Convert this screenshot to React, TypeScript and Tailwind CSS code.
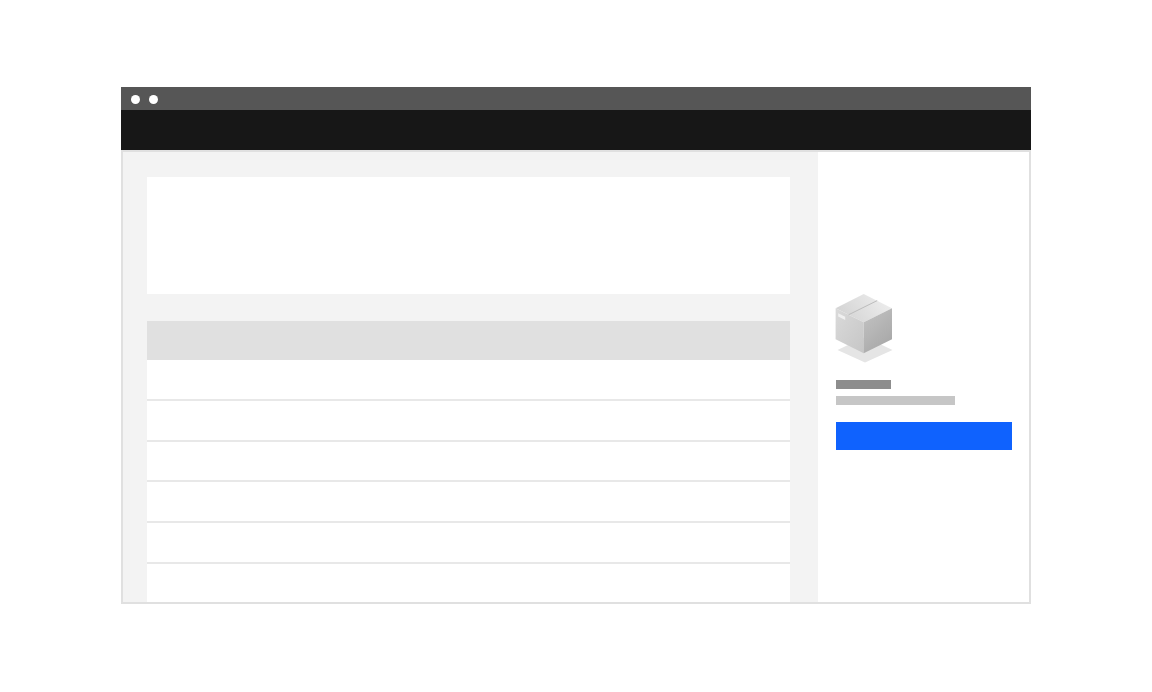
import React from 'react';

const rows = [1, 2, 3, 4, 5];

const BoxIcon: React.FC = () => (
  <svg width="60" height="69" viewBox="0 0 60 69" className="-ml-px" aria-hidden="true">
    <defs>
      <linearGradient id="box-top" x1="0" y1="0.7" x2="1" y2="0.3">
        <stop offset="0" stopColor="#d2d2d2" />
        <stop offset="1" stopColor="#eeeeee" />
      </linearGradient>
      <linearGradient id="box-left" x1="0" y1="0" x2="1" y2="1">
        <stop offset="0" stopColor="#dadada" />
        <stop offset="1" stopColor="#c6c6c6" />
      </linearGradient>
      <linearGradient id="box-right" x1="0" y1="0" x2="0.6" y2="1">
        <stop offset="0" stopColor="#c4c4c4" />
        <stop offset="1" stopColor="#a8a8a8" />
      </linearGradient>
    </defs>
    <path d="M2.5 56 30 43 57.5 56 30 68.5Z" fill="#e5e5e5" />
    <path d="M28.7 0 57 14.2 28.7 28.3 0.6 14.2Z" fill="url(#box-top)" />
    <path d="M0.6 14.2 28.7 28.3V59.2L0.6 45.2Z" fill="url(#box-left)" />
    <path d="M28.7 28.3 57 14.2V45.2L28.7 59.2Z" fill="url(#box-right)" />
    <path d="M13.5 20.8 42.2 6.6" stroke="#bcbcbc" strokeWidth="1" />
    <path d="M3.2 19.2 10.2 22.7V26L3.2 22.5Z" fill="#f0f0f0" />
  </svg>
);

const App: React.FC = () => {
  return (
    <div className="bg-white px-[121px] py-[87px]">
      <div>
        {/* Window bar */}
        <div className="flex h-[23px] items-center gap-[9px] bg-[#565656] px-[10px] pt-[2px]">
          <span className="h-[9px] w-[9px] rounded-full bg-white" />
          <span className="h-[9px] w-[9px] rounded-full bg-white" />
        </div>

        {/* Header */}
        <header className="h-10 bg-[#171717]" />

        <div className="flex border-2 border-[#e0e0e0]">
          {/* Content */}
          <main className="flex-1 bg-[#f3f3f3] pt-[25px] pr-7 pl-6">
            <section className="h-[117px] bg-white" />
            <section className="mt-[27px]">
              <div className="h-[39px] bg-[#e0e0e0]" />
              <div className="flex h-[242px] flex-col bg-white">
                {rows.map((row) => (
                  <div key={row} className="flex-1 border-b-2 border-[#e8e8e8]" />
                ))}
                <div className="h-[38px]" />
              </div>
            </section>
          </main>

          {/* Side panel */}
          <aside className="w-[211px] bg-white pt-[142px] pr-[17px] pl-[18px]">
            <BoxIcon />
            <div className="mt-[17px] h-[9px] w-[55px] bg-[#8d8d8d]" />
            <div className="mt-[7px] h-[9px] w-[119px] bg-[#c6c6c6]" />
            <button
              type="button"
              aria-label="Action"
              className="mt-[17px] block h-7 w-full bg-[#0f62fe]"
            />
          </aside>
        </div>
      </div>
    </div>
  );
};

export default App;
